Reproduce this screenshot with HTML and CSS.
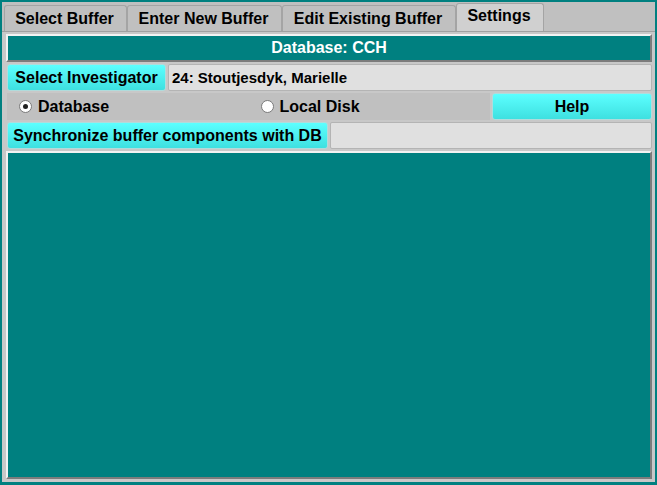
FILE: index.html
```html
<!DOCTYPE html>
<html>
<head>
<meta charset="utf-8">
<link rel="stylesheet" href="styles.css">
</head>
<body>
<div class="window">
  <div class="tabs">
    <div class="tab t1">Select Buffer</div>
    <div class="tab t2">Enter New Buffer</div>
    <div class="tab t3">Edit Existing Buffer</div>
    <div class="tab t4 active">Settings</div>
  </div>
  <div class="panel">
    <div class="header">Database: CCH</div>
    <div class="row">
      <div class="btn btn-inv">Select Investigator</div>
      <div class="field">24: Stoutjesdyk, Marielle</div>
    </div>
    <div class="row">
      <div class="radios">
        <div class="radio-cell"><span class="radio checked"></span><span class="rlabel">Database</span></div>
        <div class="radio-cell"><span class="radio"></span><span class="rlabel">Local Disk</span></div>
      </div>
      <div class="btn btn-help">Help</div>
    </div>
    <div class="row">
      <div class="btn btn-sync">Synchronize buffer components with DB</div>
      <div class="field"></div>
    </div>
    <div class="canvas"></div>
  </div>
</div>
</body>
</html>
```
FILE: styles.css
```css
* { box-sizing: border-box; }
html, body { margin: 0; padding: 0; }
body {
  width: 657px;
  height: 485px;
  background: #008080;
  font-family: "Liberation Sans", Arial, sans-serif;
  font-weight: bold;
  color: #000;
  overflow: hidden;
}
.window {
  margin: 2px 2px 0 2px;
  width: 653px;
  height: 480px;
  background: #c0c0c0;
  display: flex;
  flex-direction: column;
}
.tabs {
  display: flex;
  align-items: flex-end;
  height: 29px;
  padding-left: 2px;
}
.tab {
  height: 26px;
  border: 1px solid #a4a4a4;
  border-bottom: none;
  border-radius: 3px 3px 0 0;
  background: #c0c0c0;
  font-size: 16px;
  display: flex;
  align-items: center;
  justify-content: center;
  padding-right: 2px;
}
.tab.active {
  height: 28px;
  background: #d0d0d0;
  padding-bottom: 4px;
}
.t1 { width: 123px; }
.t2 { width: 155px; }
.t3 { width: 174px; }
.t4 { width: 88px; }
.panel {
  flex: 1;
  border-top: 1px solid #a0a0a0;
  background: #c8c8c8;
  padding: 2px 3px 3px 4px;
  display: flex;
  flex-direction: column;
}
.header {
  height: 28px;
  background: #008080;
  border: 2px solid;
  border-color: #f2f2f2 #7c7c7c #7c7c7c #f2f2f2;
  color: #fff;
  font-size: 16px;
  display: flex;
  align-items: center;
  justify-content: center;
}
.row {
  display: flex;
  height: 27px;
  margin-top: 2px;
  gap: 2px;
}
.btn {
  background: linear-gradient(#5cffff, #3ee0e0);
  border: 1px solid #b0dcdc;
  border-radius: 3px;
  font-size: 16px;
  display: flex;
  align-items: center;
  justify-content: center;
}
.btn-inv { width: 159px; margin-left: 1px; }
.btn-sync { width: 321px; margin-left: 1px; }
.btn-help { width: 160px; }
.field {
  flex: 1;
  background: #e0e0e0;
  border: 1px solid #b4b4b4;
  border-radius: 2px;
  font-size: 15px;
  display: flex;
  align-items: center;
  padding-left: 3px;
}
.radios {
  flex: 1;
  background: #c0c0c0;
  display: flex;
  margin-left: 1px;
}
.radio-cell {
  width: 50%;
  display: flex;
  align-items: center;
  padding-left: 12px;
  font-size: 16px;
}
.radio {
  width: 13px;
  height: 13px;
  border-radius: 50%;
  background: #fff;
  border: 1px solid #7a7a7a;
  margin-right: 6px;
  position: relative;
}
.radio.checked::after {
  content: "";
  position: absolute;
  left: 3px;
  top: 3px;
  width: 5px;
  height: 5px;
  border-radius: 50%;
  background: #222;
}
.canvas {
  flex: 1;
  margin-top: 2px;
  background: #008080;
  border: 2px solid;
  border-color: #f2f2f2 #7c7c7c #7c7c7c #f2f2f2;
}
```
